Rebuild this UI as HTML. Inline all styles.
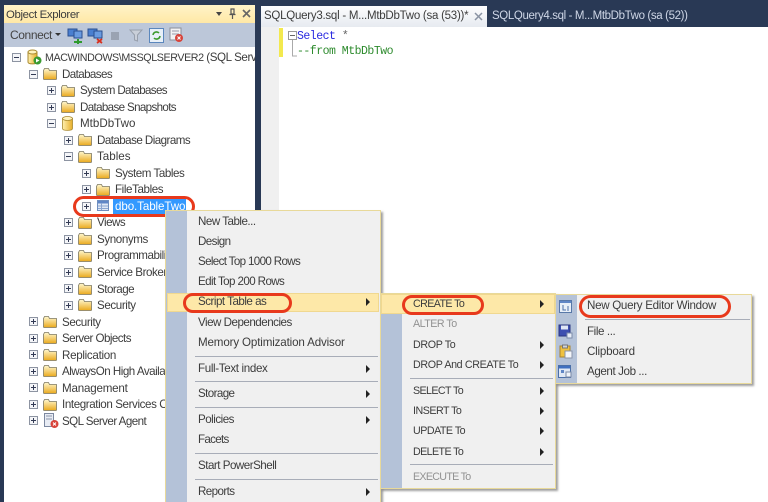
<!DOCTYPE html>
<html><head><meta charset="utf-8"><style>
html,body{margin:0;padding:0;overflow:hidden;width:768px;height:502px}
body{background:#293955;position:relative;font-family:"Liberation Sans",sans-serif;font-size:12px;color:#3c3c3c}
div,span.t,svg.i{position:absolute}
.t{white-space:nowrap;line-height:14px;height:14px;font-size:11.6px}
#tr .t{margin-top:1px;letter-spacing:-.45px}
.t.c{font-size:10.7px}
.m{color:#3c3c3c}
.g{color:#929292}
.sep{height:1px;background:#a8adb8}
.arr{width:0;height:0;border-left:4px solid #222;border-top:4px solid transparent;border-bottom:4px solid transparent}
.menu{background:#f0f0f0;border:1px solid #e8d99a;box-sizing:border-box;box-shadow:2px 2px 2px rgba(80,80,80,.55)}
.col{background:#b4c2d8}
.hl{background:#fde8a8;border:1px solid #f0d890;box-sizing:border-box}
.oval{border:3px solid #e8391c;border-radius:12px;box-sizing:border-box}
#all{left:0;top:0;width:768px;height:502px;overflow:hidden;filter:blur(.35px)}
</style></head><body>
<svg width="0" height="0" style="position:absolute">
<defs>
<linearGradient id="fg" x1="0" y1="0" x2="0" y2="1"><stop offset="0" stop-color="#fff8d0"/><stop offset="1" stop-color="#eaa91c"/></linearGradient>
<linearGradient id="cy" x1="0" y1="0" x2="1" y2="0"><stop offset="0" stop-color="#fff0b0"/><stop offset="1" stop-color="#e6ae2a"/></linearGradient>
<symbol id="f" viewBox="0 0 14 12"><path d="M.5 2.500V11a.5.5 0 0 0 .5.5h12a.5.5 0 0 0 .5-.5V2.500H6.500L5.500 .5H1.500z" fill="url(#fg)" stroke="#7d7860" stroke-width=".8"/></symbol>
<symbol id="p" viewBox="0 0 9 9"><rect x=".5" y=".5" width="8" height="8" fill="#f4f5f8" stroke="#8d94a2"/><path d="M2 4.500h5M4.500 2v5" stroke="#333b55"/></symbol>
<symbol id="n" viewBox="0 0 9 9"><rect x=".5" y=".5" width="8" height="8" fill="#f4f5f8" stroke="#8d94a2"/><path d="M2 4.500h5" stroke="#333b55"/></symbol>
<symbol id="c" viewBox="0 0 11 15"><path d="M.5 2.500v10c0 2.500 10 2.500 10 0v-10z" fill="url(#cy)" stroke="#a98a30" stroke-width=".8"/><ellipse cx="5.500" cy="2.500" rx="5" ry="2" fill="#fff3bd" stroke="#a98a30" stroke-width=".8"/></symbol>
</defs></svg>
<div id="all">
<!-- Object explorer -->
<div style="left:4px;top:5px;width:251px;height:18px;background:linear-gradient(#fff3c8,#ffe8a6)"></div>
<span class="t" style="left:6px;top:8px;font-size:11.400px;letter-spacing:-.35px">Object Explorer</span>
<div style="left:216px;top:12px;width:0;height:0;border-left:3px solid transparent;border-right:3px solid transparent;border-top:4px solid #444"></div>
<svg class="i" style="left:228px;top:8px" width="9" height="11" viewBox="0 0 9 11"><path d="M3 1h3v5H3zM1.500 6.500h6M4.500 7v4" fill="none" stroke="#555" stroke-width="1.200"/></svg>
<svg class="i" style="left:242px;top:9px" width="9" height="9" viewBox="0 0 9 9"><path d="M1 1l7 7M8 1L1 8" stroke="#666" stroke-width="1.600"/></svg>
<div style="left:4px;top:23px;width:251px;height:24px;background:#bcc7d9"></div>
<span class="t" style="left:10px;top:28px;color:#444;font-size:12px;letter-spacing:-.4px">Connect</span>
<div style="left:55px;top:33px;width:0;height:0;border-left:3px solid transparent;border-right:3px solid transparent;border-top:3px solid #333"></div>
<svg class="i" style="left:67px;top:28px" width="17" height="16" viewBox="0 0 17 16"><rect x="1" y="1" width="9" height="7" fill="#4a7fd0" stroke="#2a4f90"/><rect x="7" y="3" width="8" height="7" fill="#6a9be0" stroke="#2a4f90"/><path d="M7 14h8M11 11v5" stroke="#2f9a2f" stroke-width="2"/></svg>
<svg class="i" style="left:87px;top:28px" width="17" height="16" viewBox="0 0 17 16"><rect x="1" y="1" width="9" height="7" fill="#4a7fd0" stroke="#2a4f90"/><rect x="7" y="3" width="8" height="7" fill="#6a9be0" stroke="#2a4f90"/><path d="M10 11l5 4M15 11l-5 4" stroke="#d8301f" stroke-width="1.800"/></svg>
<div style="left:111px;top:32px;width:8px;height:8px;background:#9aa3b2"></div>
<svg class="i" style="left:129px;top:29px" width="14" height="13" viewBox="0 0 14 13"><path d="M1 1h12L8.500 6v6l-3-1V6z" fill="#c9cfd9" stroke="#98a0ad"/></svg>
<svg class="i" style="left:149px;top:28px" width="15" height="15" viewBox="0 0 15 15"><rect x=".5" y=".5" width="14" height="14" fill="#e8f0f8" stroke="#5b87bd"/><path d="M4 7a3.500 3.500 0 0 1 6-2M11 8a3.500 3.500 0 0 1-6 2" fill="none" stroke="#3b9a2b" stroke-width="1.600"/></svg>
<svg class="i" style="left:168px;top:27px" width="17" height="16" viewBox="0 0 17 16"><rect x="2" y="1" width="11" height="12" fill="#f2f2f4" stroke="#8a8f9a"/><path d="M4 4h7M4 7h7" stroke="#99a"/><circle cx="11" cy="11" r="4" fill="#d8433a"/><path d="M9.500 9.500l3 3M12.500 9.500l-3 3" stroke="#fff"/></svg>
<div style="left:4px;top:47px;width:251px;height:455px;background:#fff"></div>
<div id="tr" style="left:4px;top:47px;width:251px;height:455px;overflow:hidden">
<svg class="i" style="left:8px;top:6px" width="9" height="9"><use href="#n"/></svg>
<svg class="i" style="left:23px;top:2px" width="15" height="16" viewBox="0 0 15 16"><path d="M1 3v10c0 2.500 9 2.500 9 0V3z" fill="url(#cy)" stroke="#a98a30"/><ellipse cx="5.500" cy="3" rx="4.500" ry="2" fill="#fff3bd" stroke="#a98a30"/><circle cx="10.500" cy="11.500" r="4" fill="#3a9a30"/><path d="M9 9.500l3.500 2-3.500 2z" fill="#fff"/></svg>
<span class="t c" style="left:41px;top:3px;letter-spacing:-.4px">MACWINDOWS\MSSQLSERVER2 <span style="font-size:11.600px;letter-spacing:-.4px">(SQL Server 12.0.2000 - sa)</span></span>

<svg class="i" style="left:25px;top:23px" width="9" height="9"><use href="#n"/></svg>
<svg class="i" style="left:39px;top:21px" width="14" height="12"><use href="#f"/></svg>
<span class="t" style="left:58px;top:20px;letter-spacing:-.6px">Databases</span>

<svg class="i" style="left:43px;top:39px" width="9" height="9"><use href="#p"/></svg>
<svg class="i" style="left:57px;top:38px" width="14" height="12"><use href="#f"/></svg>
<span class="t" style="left:76px;top:36px;letter-spacing:-.65px">System Databases</span>

<svg class="i" style="left:43px;top:56px" width="9" height="9"><use href="#p"/></svg>
<svg class="i" style="left:57px;top:54px" width="14" height="12"><use href="#f"/></svg>
<span class="t" style="left:76px;top:53px;letter-spacing:-.65px">Database Snapshots</span>

<svg class="i" style="left:43px;top:72px" width="9" height="9"><use href="#n"/></svg>
<svg class="i" style="left:58px;top:69px" width="11" height="15"><use href="#c"/></svg>
<span class="t" style="left:76px;top:69px;letter-spacing:0">MtbDbTwo</span>

<svg class="i" style="left:60px;top:89px" width="9" height="9"><use href="#p"/></svg>
<svg class="i" style="left:74px;top:87px" width="14" height="12"><use href="#f"/></svg>
<span class="t" style="left:93px;top:86px;letter-spacing:-.55px">Database Diagrams</span>

<svg class="i" style="left:60px;top:105px" width="9" height="9"><use href="#n"/></svg>
<svg class="i" style="left:74px;top:104px" width="14" height="12"><use href="#f"/></svg>
<span class="t" style="left:93px;top:102px;letter-spacing:0">Tables</span>

<svg class="i" style="left:78px;top:122px" width="9" height="9"><use href="#p"/></svg>
<svg class="i" style="left:92px;top:120px" width="14" height="12"><use href="#f"/></svg>
<span class="t" style="left:111px;top:119px">System Tables</span>

<svg class="i" style="left:78px;top:138px" width="9" height="9"><use href="#p"/></svg>
<svg class="i" style="left:92px;top:137px" width="14" height="12"><use href="#f"/></svg>
<span class="t" style="left:111px;top:135px;letter-spacing:-.4px">FileTables</span>

<svg class="i" style="left:78px;top:155px" width="9" height="9"><use href="#p"/></svg>
<svg class="i" style="left:93px;top:153px" width="12" height="11" viewBox="0 0 12 11"><rect x=".5" y=".5" width="11" height="10" fill="#dfe8f5" stroke="#6f8fc0"/><rect x="1" y="1" width="10" height="2.500" fill="#5f86c6"/><path d="M1 6h10M1 8.500h10M4.500 3v7" stroke="#8aa5d0"/></svg>
<div style="left:109px;top:151px;width:73px;height:16px;background:#3399ff"></div>
<span class="t" style="left:111px;top:152px;color:#fff;letter-spacing:-.1px">dbo.TableTwo</span>

<svg class="i" style="left:60px;top:171px" width="9" height="9"><use href="#p"/></svg>
<svg class="i" style="left:74px;top:170px" width="14" height="12"><use href="#f"/></svg>
<span class="t" style="left:93px;top:168px;letter-spacing:-.5px">Views</span>

<svg class="i" style="left:60px;top:188px" width="9" height="9"><use href="#p"/></svg>
<svg class="i" style="left:74px;top:186px" width="14" height="12"><use href="#f"/></svg>
<span class="t" style="left:93px;top:185px;letter-spacing:-.4px">Synonyms</span>

<svg class="i" style="left:60px;top:204px" width="9" height="9"><use href="#p"/></svg>
<svg class="i" style="left:74px;top:203px" width="14" height="12"><use href="#f"/></svg>
<span class="t" style="left:93px;top:201px">Programmability</span>

<svg class="i" style="left:60px;top:221px" width="9" height="9"><use href="#p"/></svg>
<svg class="i" style="left:74px;top:219px" width="14" height="12"><use href="#f"/></svg>
<span class="t" style="left:93px;top:218px">Service Broker</span>

<svg class="i" style="left:60px;top:237px" width="9" height="9"><use href="#p"/></svg>
<svg class="i" style="left:74px;top:236px" width="14" height="12"><use href="#f"/></svg>
<span class="t" style="left:93px;top:235px;letter-spacing:-.5px">Storage</span>

<svg class="i" style="left:60px;top:254px" width="9" height="9"><use href="#p"/></svg>
<svg class="i" style="left:74px;top:252px" width="14" height="12"><use href="#f"/></svg>
<span class="t" style="left:93px;top:251px;letter-spacing:-.4px">Security</span>

<svg class="i" style="left:25px;top:270px" width="9" height="9"><use href="#p"/></svg>
<svg class="i" style="left:39px;top:269px" width="14" height="12"><use href="#f"/></svg>
<span class="t" style="left:58px;top:268px;letter-spacing:-.4px">Security</span>

<svg class="i" style="left:25px;top:287px" width="9" height="9"><use href="#p"/></svg>
<svg class="i" style="left:39px;top:285px" width="14" height="12"><use href="#f"/></svg>
<span class="t" style="left:58px;top:284px;letter-spacing:-.55px">Server Objects</span>

<svg class="i" style="left:25px;top:303px" width="9" height="9"><use href="#p"/></svg>
<svg class="i" style="left:39px;top:302px" width="14" height="12"><use href="#f"/></svg>
<span class="t" style="left:58px;top:301px;letter-spacing:-.3px">Replication</span>

<svg class="i" style="left:25px;top:320px" width="9" height="9"><use href="#p"/></svg>
<svg class="i" style="left:39px;top:318px" width="14" height="12"><use href="#f"/></svg>
<span class="t" style="left:58px;top:317px;letter-spacing:-.5px">AlwaysOn High Availability</span>

<svg class="i" style="left:25px;top:336px" width="9" height="9"><use href="#p"/></svg>
<svg class="i" style="left:39px;top:335px" width="14" height="12"><use href="#f"/></svg>
<span class="t" style="left:58px;top:334px;letter-spacing:-.2px">Management</span>

<svg class="i" style="left:25px;top:353px" width="9" height="9"><use href="#p"/></svg>
<svg class="i" style="left:39px;top:352px" width="14" height="12"><use href="#f"/></svg>
<span class="t" style="left:58px;top:350px;letter-spacing:-.4px">Integration Services Catalogs</span>

<svg class="i" style="left:25px;top:369px" width="9" height="9"><use href="#p"/></svg>
<svg class="i" style="left:40px;top:366px" width="15" height="16" viewBox="0 0 15 16"><rect x=".5" y=".5" width="9" height="13" fill="#e8ecf4" stroke="#7c88a0"/><path d="M2 3h6M2 6h6" stroke="#8a94aa"/><circle cx="10.500" cy="11" r="4" fill="#d8433a"/><path d="M9 9.500l3 3M12 9.500l-3 3" stroke="#fff"/></svg>
<span class="t" style="left:58px;top:367px;letter-spacing:-.55px">SQL Server Agent</span>
</div>

<!-- Editor -->
<div style="left:261px;top:6px;width:226px;height:21px;background:linear-gradient(#fdfdfe,#e6eaf0)"></div>
<span class="t" style="left:264px;top:9px;font-size:11.500px;letter-spacing:-.25px">SQLQuery3.sql - M...MtbDbTwo (sa (53))*</span>
<svg class="i" style="left:474px;top:12px" width="9" height="9" viewBox="0 0 9 9"><path d="M1 1l7 7M8 1L1 8" stroke="#8a93a3" stroke-width="1.500"/></svg>
<span class="t" style="left:492px;top:9px;color:#ced6e6;font-size:11.500px;letter-spacing:-.37px">SQLQuery4.sql - M...MtbDbTwo (sa (52))</span>
<div style="left:261px;top:27px;width:507px;height:475px;background:#fff"></div>
<div style="left:261px;top:27px;width:18px;height:475px;background:#f0f0f0"></div>
<div style="left:279px;top:28px;width:4px;height:29px;background:#f3e94e"></div>
<svg class="i" style="left:285px;top:30px" width="12" height="28" viewBox="0 0 12 28"><rect x="3.500" y="1.500" width="8" height="8" fill="#fff" stroke="#9a9a9a"/><path d="M5 5.500h5" stroke="#666"/><path d="M7.500 10v16H12" fill="none" stroke="#aaa"/></svg>
<span class="t" style="left:297px;top:28px;font-family:'Liberation Mono',monospace;font-size:11.500px;color:#2a2ae0;letter-spacing:-.5px;top:30px">Select <span style="color:#666">*</span></span>
<span class="t" style="left:297px;top:45px;font-family:'Liberation Mono',monospace;font-size:11.500px;color:#2e8b2e;letter-spacing:-.5px">--from MtbDbTwo</span>

<!-- Selected oval -->
<div class="oval" style="left:73px;top:196px;width:122px;height:21px"></div>

<!-- Menu 1 -->
<div class="menu" style="left:165px;top:210px;width:216px;height:300px"></div>
<div class="col" style="left:166px;top:211px;width:21px;height:291px"></div>
<div class="hl" style="left:167px;top:293px;width:212px;height:19px"></div>
<div class="oval" style="left:183px;top:293px;width:109px;height:20px"></div>
<span class="t m" style="left:198px;top:215px;letter-spacing:-.5px">New Table...</span>
<span class="t m" style="left:198px;top:235px;letter-spacing:-.6px">Design</span>
<span class="t m" style="left:198px;top:255px;letter-spacing:-.65px">Select Top 1000 Rows</span>
<span class="t m" style="left:198px;top:275px;letter-spacing:-.6px">Edit Top 200 Rows</span>
<span class="t m" style="left:198px;top:295px;letter-spacing:-.5px">Script Table as</span>
<span class="t m" style="left:198px;top:316px;letter-spacing:-.5px">View Dependencies</span>
<span class="t m" style="left:198px;top:336px;letter-spacing:-.15px">Memory Optimization Advisor</span>
<div class="sep" style="left:195px;top:356px;width:183px"></div>
<span class="t m" style="left:198px;top:362px;letter-spacing:-.35px">Full-Text index</span>
<div class="sep" style="left:195px;top:381px;width:183px"></div>
<span class="t m" style="left:198px;top:387px;letter-spacing:-.6px">Storage</span>
<div class="sep" style="left:195px;top:407px;width:183px"></div>
<span class="t m" style="left:198px;top:413px;letter-spacing:-.5px">Policies</span>
<span class="t m" style="left:198px;top:433px;letter-spacing:-.7px">Facets</span>
<div class="sep" style="left:195px;top:453px;width:183px"></div>
<span class="t m" style="left:198px;top:459px;letter-spacing:-.5px">Start PowerShell</span>
<div class="sep" style="left:195px;top:479px;width:183px"></div>
<span class="t m" style="left:198px;top:485px;letter-spacing:-.6px">Reports</span>
<div class="arr" style="left:366px;top:298px"></div>
<div class="arr" style="left:366px;top:365px"></div>
<div class="arr" style="left:366px;top:390px"></div>
<div class="arr" style="left:366px;top:416px"></div>
<div class="arr" style="left:366px;top:488px"></div>

<!-- Menu 2 -->
<div class="menu" style="left:380px;top:293px;width:176px;height:196px"></div>
<div class="col" style="left:381px;top:294px;width:21px;height:194px"></div>
<div class="hl" style="left:381px;top:294px;width:174px;height:20px"></div>
<div class="oval" style="left:402px;top:295px;width:82px;height:20px"></div>
<span class="t m c" style="left:413px;top:297px;letter-spacing:-.6px">CREATE To</span>
<span class="t g c" style="left:413px;top:317px;letter-spacing:-.5px">ALTER To</span>
<span class="t m c" style="left:413px;top:338px;letter-spacing:-.35px">DROP To</span>
<span class="t m c" style="left:413px;top:358px;letter-spacing:-.35px">DROP And CREATE To</span>
<div class="sep" style="left:410px;top:378px;width:143px"></div>
<span class="t m c" style="left:413px;top:384px;letter-spacing:-.6px">SELECT To</span>
<span class="t m c" style="left:413px;top:404px;letter-spacing:-.5px">INSERT To</span>
<span class="t m c" style="left:413px;top:424px;letter-spacing:-.5px">UPDATE To</span>
<span class="t m c" style="left:413px;top:445px;letter-spacing:-.6px">DELETE To</span>
<div class="sep" style="left:410px;top:464px;width:143px"></div>
<span class="t g c" style="left:413px;top:470px;letter-spacing:-.7px">EXECUTE To</span>
<div class="arr" style="left:540px;top:300px"></div>
<div class="arr" style="left:540px;top:341px"></div>
<div class="arr" style="left:540px;top:361px"></div>
<div class="arr" style="left:540px;top:387px"></div>
<div class="arr" style="left:540px;top:407px"></div>
<div class="arr" style="left:540px;top:427px"></div>
<div class="arr" style="left:540px;top:448px"></div>

<!-- Menu 3 -->
<div class="menu" style="left:555px;top:294px;width:197px;height:90px"></div>
<div class="col" style="left:556px;top:295px;width:21px;height:88px"></div>
<svg class="i" style="left:559px;top:300px" width="14" height="13" viewBox="0 0 14 13"><rect x=".5" y=".5" width="12" height="12" fill="#e8eff8" stroke="#5878a8"/><rect x="1" y="1" width="11" height="2" fill="#5f86c6"/><path d="M4 5v5h3M9 6v5" stroke="#4a6fa8" fill="none"/></svg>
<div class="sep" style="left:585px;top:319px;width:165px"></div>
<svg class="i" style="left:558px;top:324px" width="15" height="15" viewBox="0 0 15 15"><rect x="1" y="1" width="11" height="11" fill="#3d4fb0" stroke="#2a3580"/><rect x="3" y="1.500" width="7" height="4" fill="#dfe6f5"/><rect x="9" y="9" width="5" height="5" fill="#e8eef8" stroke="#7a8aa8"/></svg>
<svg class="i" style="left:559px;top:344px" width="14" height="15" viewBox="0 0 14 15"><rect x="1" y="2" width="10" height="11" fill="#efc13f" stroke="#a98430"/><rect x="3.500" y="1" width="5" height="3" fill="#cfd3da" stroke="#777"/><rect x="6" y="7" width="7" height="7" fill="#f4f6fa" stroke="#8a94aa"/></svg>
<svg class="i" style="left:558px;top:365px" width="15" height="14" viewBox="0 0 15 14"><rect x=".5" y=".5" width="12" height="12" fill="#dfe8f5" stroke="#4a6fa8"/><rect x="1" y="1" width="11" height="2.500" fill="#3f6fc0"/><rect x="3" y="5" width="3" height="3" fill="#5f86c6"/><rect x="8" y="7" width="5" height="5" fill="#f0f4fa" stroke="#7a8aa8"/></svg>
<div class="oval" style="left:579px;top:295px;width:152px;height:23px"></div>
<span class="t m" style="left:587px;top:299px;letter-spacing:-.3px">New Query Editor Window</span>
<span class="t m" style="left:587px;top:325px;letter-spacing:-.4px">File ...</span>
<span class="t m" style="left:587px;top:345px;letter-spacing:-.2px">Clipboard</span>
<span class="t m" style="left:587px;top:365px;letter-spacing:-.4px">Agent Job ...</span>
</div>
</body></html>
